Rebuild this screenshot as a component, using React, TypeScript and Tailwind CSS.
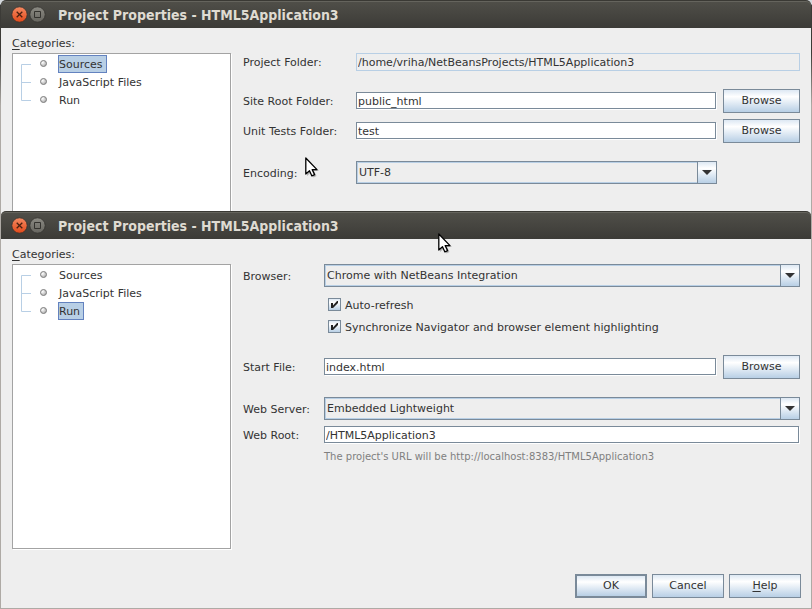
import React, { useId } from "react";

function Cursor({ className }: { className: string }) {
  return (
    <svg className={"absolute " + className} width="14" height="21" viewBox="0 0 14 21" aria-hidden="true">
      <path d="M2 3v16l4-3.500 2.500 5 3-1.500-2.500-5h5z" fill="#000" opacity="0.25" />
      <path d="M.8 1v16l3.700-3.300 2.400 5.200 2.700-1.300-2.400-5h4.800z" fill="#fff" stroke="#000" strokeWidth="1.300" strokeLinejoin="round" />
    </svg>
  );
}

function TitleBar() {
  return (
    <header className="flex h-[28px] items-center rounded-t-[5px] border-t border-[#3a3934] bg-linear-to-b from-[#504f49] to-[#3c3b37] pl-[10px] shadow-[inset_0_1px_0_#65645d]">
      <button aria-label="Close" className="size-[17px]">
        <svg width="17" height="17" viewBox="0 0 17 17">
          <defs>
            <linearGradient id="closeFill" x1="0" y1="0" x2="0" y2="1">
              <stop offset="0" stopColor="#f58a62" />
              <stop offset="1" stopColor="#e2491a" />
            </linearGradient>
          </defs>
          <circle cx="8.500" cy="8.500" r="7.700" fill="url(#closeFill)" stroke="#33322e" strokeWidth="0.800" />
          <path d="M5.700 5.700l5.600 5.600m0-5.600l-5.600 5.600" stroke="#4a2010" strokeWidth="1.300" />
        </svg>
      </button>
      <button aria-label="Maximize" className="ml-px size-[17px]">
        <svg width="17" height="17" viewBox="0 0 17 17">
          <defs>
            <linearGradient id="maxFill" x1="0" y1="0" x2="0" y2="1">
              <stop offset="0" stopColor="#8b8a83" />
              <stop offset="1" stopColor="#66655f" />
            </linearGradient>
          </defs>
          <circle cx="8.500" cy="8.500" r="7.700" fill="url(#maxFill)" stroke="#33322e" strokeWidth="0.800" />
          <path d="M5.500 5.500h6v6h-6z" fill="none" stroke="#33322e" />
        </svg>
      </button>
      <h1 className="ml-[12px] font-['DejaVu_Sans_Condensed','DejaVu_Sans',sans-serif] text-[14px] leading-[20px] font-bold whitespace-nowrap text-[#dfdbd2]">
        Project Properties - HTML5Application3
      </h1>
    </header>
  );
}

const categories = ["Sources", "JavaScript Files", "Run"];
const branches = ["M18 9.500H8.500V18", "M18 9.500H8.500M8.500 0V18", "M8.500 0V9.500H18"];

function Categories({ selected, listClass }: { selected: string; listClass: string }) {
  const id = useId();
  return (
    <nav className="flex w-[219px] shrink-0 flex-col pt-[9px]" aria-labelledby={id}>
      <h2 id={id} className="leading-[14px]">
        <span className="underline underline-offset-2">C</span>ategories:
      </h2>
      <ul className={"mt-[2px] border border-[#a3a3a3] bg-white pt-px shadow-[1px_1px_0_#fff] " + listClass}>
        {categories.map((name, i) => (
          <li key={name} className="flex h-[18px]">
            <svg width="45" height="18" viewBox="0 0 45 18" aria-hidden="true">
              <defs>
                <radialGradient id="bullet" cx="0.350" cy="0.350" r="0.700">
                  <stop offset="0" stopColor="#fff" />
                  <stop offset="1" stopColor="#a8a8a8" />
                </radialGradient>
              </defs>
              <path d={branches[i]} fill="none" stroke="#b8cfe5" />
              <circle cx="30.500" cy="8.500" r="3" fill="url(#bullet)" stroke="#808080" />
            </svg>
            <button
              className={
                name === selected
                  ? "border border-[#6382bf] bg-[#b8cfe5] pt-[2px] pr-[3px] leading-[14px]"
                  : "border border-transparent pt-[2px] pr-[3px] leading-[14px]"
              }
            >
              {name}
            </button>
          </li>
        ))}
      </ul>
    </nav>
  );
}

function Label({ htmlFor, children, className }: { htmlFor: string; children: React.ReactNode; className: string }) {
  return (
    <label htmlFor={htmlFor} className={"shrink-0 pt-[2px] leading-[14px] " + className}>
      {children}
    </label>
  );
}

function TextField({ id, value }: { id: string; value: string }) {
  return (
    <input
      id={id}
      type="text"
      defaultValue={value}
      className="mr-px mb-px h-[17px] min-w-0 flex-1 border border-[#7a8a99] bg-white px-px pt-px shadow-[1px_1px_0_#fff] outline-none"
    />
  );
}

const surface = "border-[#7a8a99] bg-linear-to-b from-[#dde8f3] via-white via-30% to-[#b8cfe5] ";

function PushButton({ children, className }: { children: React.ReactNode; className: string }) {
  return <button className={"h-[24px] shrink-0 pt-px " + surface + className}>{children}</button>;
}

function Combo({ id, value }: { id: string; value: string }) {
  return (
    <div className="relative flex h-[23px] min-w-0 flex-1">
      <select
        id={id}
        className="w-full appearance-none border border-[#7a8a99] bg-[#eee] pt-px pr-6 pl-[2px] shadow-[inset_0_0_0_1px_#b8cfe5] outline-none"
      >
        <option>{value}</option>
      </select>
      <span className={"pointer-events-none absolute inset-y-0 right-0 flex w-[20px] items-center justify-center border " + surface}>
        <svg width="10" height="5" viewBox="0 0 10 5" aria-hidden="true">
          <path d="M0 0h10L5 5z" fill="#333" />
        </svg>
      </span>
    </div>
  );
}

function CheckRow({ label }: { label: string }) {
  return (
    <label className="flex h-[13px] items-center gap-1">
      <span className={"relative flex size-[13px] border " + surface}>
        <input type="checkbox" defaultChecked className="peer size-full appearance-none" />
        <svg className="pointer-events-none absolute inset-0 hidden peer-checked:block" width="11" height="11" viewBox="0 0 11 11">
          <path d="M2 4h2v2.500L8 2h1v2L4 9H2z" fill="#222" />
        </svg>
      </span>
      <span className="pt-[2px] leading-[14px]">{label}</span>
    </label>
  );
}

export default function App() {
  return (
    <div className="relative font-['DejaVu_Sans',sans-serif] text-[11px] text-[#333]">
      <section className="overflow-hidden bg-[linear-gradient(#d4d8dc_0_4px,#3c3b37_5px_25%,#aeaaa5_50%)] px-px">
        <TitleBar />
        <div className="flex gap-3 bg-[#eee] px-[11px]">
          <Categories selected="Sources" listClass="flex-1 border-b-0" />
          <form className="min-w-0 flex-1 pt-[25px] pb-[27px]">
            <div className="flex items-center">
              <Label htmlFor="project" className="w-[113px]">Project Folder:</Label>
              <input
                id="project"
                readOnly
                value="/home/vriha/NetBeansProjects/HTML5Application3"
                className="h-[18px] min-w-0 flex-1 border border-[#b8cfe5] bg-[#eee] px-px outline-none"
              />
            </div>
            <div className="mt-[18px] flex items-center">
              <Label htmlFor="site" className="w-[113px]">Site Root Folder:</Label>
              <TextField id="site" value="public_html" />
              <PushButton className="ml-[6px] w-[77px] border">Browse</PushButton>
            </div>
            <div className="mt-[6px] flex items-center">
              <Label htmlFor="tests" className="w-[113px]">Unit Tests Folder:</Label>
              <TextField id="tests" value="test" />
              <PushButton className="ml-[6px] w-[77px] border">Browse</PushButton>
            </div>
            <div className="mt-[18px] flex items-center pr-[83px]">
              <Label htmlFor="encoding" className="w-[113px]">Encoding:</Label>
              <Combo id="encoding" value="UTF-8" />
            </div>
          </form>
        </div>
      </section>

      <section className="border-b border-[#aeaaa5] bg-[#aeaaa5] px-px">
        <div className="bg-[#eee]">
          <TitleBar />
          <div className="flex gap-3 px-[11px]">
            <Categories selected="Run" listClass="h-[285px]" />
            <form className="min-w-0 flex-1 pt-[25px]">
              <div className="flex items-center">
                <Label htmlFor="browser" className="w-[81px]">Browser:</Label>
                <Combo id="browser" value="Chrome with NetBeans Integration" />
              </div>
              <div className="mt-[11px] flex flex-col gap-[9px] pl-[85px]">
                <CheckRow label="Auto-refresh" />
                <CheckRow label="Synchronize Navigator and browser element highlighting" />
              </div>
              <div className="mt-[22px] flex items-center">
                <Label htmlFor="start" className="w-[81px]">Start File:</Label>
                <TextField id="start" value="index.html" />
                <PushButton className="ml-[6px] w-[77px] border">Browse</PushButton>
              </div>
              <div className="mt-[18px] flex items-center">
                <Label htmlFor="server" className="w-[81px]">Web Server:</Label>
                <Combo id="server" value="Embedded Lightweight" />
              </div>
              <div className="mt-[6px] flex items-center">
                <Label htmlFor="root-path" className="w-[81px]">Web Root:</Label>
                <TextField id="root-path" value="/HTML5Application3" />
              </div>
              <p className="mt-[6px] pl-[81px] text-[10px] leading-[14px] text-[#808080]">
                The project's URL will be http://localhost:8383/HTML5Application3
              </p>
            </form>
          </div>
          <footer className="flex justify-end gap-[5px] pt-[25px] pr-[10px] pb-[10px]">
            <PushButton className="w-[72px] border-2">OK</PushButton>
            <PushButton className="w-[72px] border">Cancel</PushButton>
            <PushButton className="w-[72px] border">
              <span className="underline underline-offset-2">H</span>elp
            </PushButton>
          </footer>
        </div>
      </section>

      <Cursor className="top-[157px] left-[305px]" />
      <Cursor className="top-[233px] left-[438px]" />
    </div>
  );
}
